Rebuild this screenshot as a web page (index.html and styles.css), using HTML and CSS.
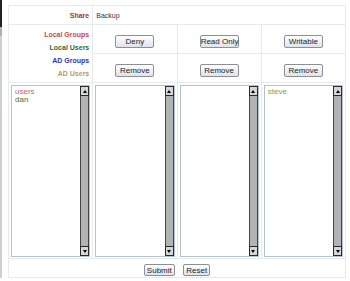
FILE: index.html
```html
<!DOCTYPE html>
<html lang="en">
<head>
    <meta charset="UTF-8">
    <meta name="viewport" content="width=device-width, initial-scale=1.0">
    <title>Share Permissions</title>
    <link rel="stylesheet" href="styles.css">
</head>
<body>
    <form id="shareForm">
        <table class="perm-table">
            <tr class="row-share">
                <td class="label"><span class="lbl-share">Share</span></td>
                <td colspan="3" class="share-name">Backup</td>
            </tr>
            <tr class="row-btn">
                <td rowspan="2" class="label legend">
                    <div class="lbl-lgroup">Local Groups</div>
                    <div class="lbl-luser">Local Users</div>
                    <div class="lbl-adgroup">AD Groups</div>
                    <div class="lbl-aduser">AD Users</div>
                </td>
                <td class="btn-cell"><button type="button" class="btn">Deny</button></td>
                <td class="btn-cell"><button type="button" class="btn">Read Only</button></td>
                <td class="btn-cell"><button type="button" class="btn">Writable</button></td>
            </tr>
            <tr class="row-btn">
                <td class="btn-cell"><button type="button" class="btn">Remove</button></td>
                <td class="btn-cell"><button type="button" class="btn">Remove</button></td>
                <td class="btn-cell"><button type="button" class="btn">Remove</button></td>
            </tr>
            <tr class="row-lists">
                <td class="list-cell">
                    <div class="listbox">
                        <div class="items">
                            <div class="item lgroup">users</div>
                            <div class="item luser">dan</div>
                        </div>
                        <div class="scrollbar"><span class="arrow up"></span><span class="track"></span><span class="arrow down"></span></div>
                    </div>
                </td>
                <td class="list-cell">
                    <div class="listbox">
                        <div class="items"></div>
                        <div class="scrollbar"><span class="arrow up"></span><span class="track"></span><span class="arrow down"></span></div>
                    </div>
                </td>
                <td class="list-cell">
                    <div class="listbox">
                        <div class="items"></div>
                        <div class="scrollbar"><span class="arrow up"></span><span class="track"></span><span class="arrow down"></span></div>
                    </div>
                </td>
                <td class="list-cell">
                    <div class="listbox">
                        <div class="items">
                            <div class="item writer">steve</div>
                        </div>
                        <div class="scrollbar"><span class="arrow up"></span><span class="track"></span><span class="arrow down"></span></div>
                    </div>
                </td>
            </tr>
            <tr class="row-submit">
                <td colspan="4" class="submit-cell">
                    <button type="submit" class="btn small">Submit</button>
                    <button type="reset" class="btn small">Reset</button>
                </td>
            </tr>
        </table>
    </form>
</body>
</html>
```

FILE: styles.css
```css
html {
    overflow: hidden;
    background: #fff linear-gradient(to bottom, #222 0, #222 27px, #c9a3ab 27px, #c9a3ab 36px, #cfcfcf 36px) no-repeat 0 0 / 2px 100%;
}
body {
    font-family: "Liberation Sans", Arial, sans-serif;
    margin: 0;
    padding: 5px 0 0 8px;
    color: #333;
}
form {
    margin: 0;
}
.perm-table {
    width: 338px;
    table-layout: fixed;
    border-collapse: collapse;
    border: 1px solid #dde1e6;
}
.perm-table td {
    border: 1px solid #e6e9ed;
    padding: 0;
}
.label {
    text-align: right;
    font-weight: bold;
    font-size: 7px;
    padding-right: 3px !important;
}
.row-share td {
    height: 18px;
}
.share-name {
    font-size: 7px;
    padding-left: 3px !important;
}
.lbl-share { color: #a33434; }
.legend div {
    line-height: 13px;
}
.lbl-lgroup { color: #d24646; }
.lbl-luser { color: #2f6a2f; }
.lbl-adgroup { color: #3232c0; }
.lbl-aduser { color: #c19462; }
.row-btn td.btn-cell {
    height: 28px;
    text-align: center;
}
.btn {
    font-family: "Liberation Sans", Arial, sans-serif;
    font-size: 8px;
    width: 39px;
    height: 13px;
    padding: 0;
    color: #222;
    white-space: nowrap;
    background: linear-gradient(#ffffff, #dfe3ec);
    border: 1px solid #8c8f96;
    border-radius: 2px;
    line-height: 11px;
    cursor: pointer;
}
.btn.small {
    width: auto;
    height: 12px;
    padding: 0 2px;
    margin: 0 2px;
}
.list-cell {
    padding: 2px 2px 1px 2px !important;
    vertical-align: top;
}
.listbox {
    display: flex;
    height: 170px;
    border: 1px solid #b3c2d2;
    background: #fff;
}
.items {
    flex: 1;
    padding: 2px 3px;
    font-size: 8px;
    line-height: 8px;
}
.item.lgroup { color: #d06262; }
.item.luser { color: #51702f; }
.item.writer { color: #7da14f; }
.scrollbar {
    width: 9px;
    display: flex;
    flex-direction: column;
}
.arrow {
    height: 8px;
    background: #d6d6d6;
    border: 1px solid #2a2a2a;
    display: flex;
    align-items: center;
    justify-content: center;
}
.arrow::before {
    content: "";
    border-left: 2px solid transparent;
    border-right: 2px solid transparent;
}
.arrow.up::before {
    border-bottom: 3px solid #000;
}
.arrow.down::before {
    border-top: 3px solid #000;
}
.track {
    flex: 1;
    background: #b3b3b3;
    border-left: 1px solid #444;
    border-right: 1px solid #444;
}
.submit-cell {
    height: 18px;
    text-align: center;
}
```
